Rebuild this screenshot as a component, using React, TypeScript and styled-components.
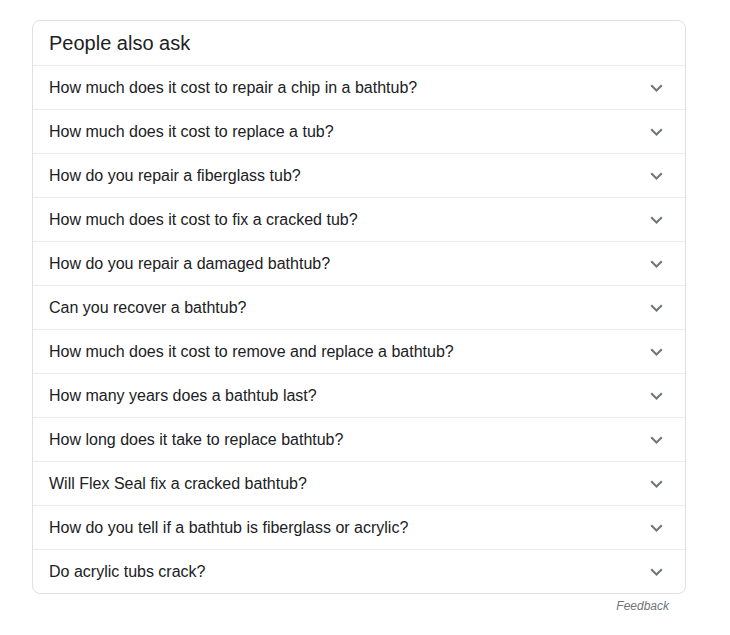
import React from "react";
import styled, { createGlobalStyle } from "styled-components";

const GlobalStyle = createGlobalStyle`
  body {
    margin: 0;
    background: #ffffff;
    font-family: "Liberation Sans", Arial, sans-serif;
  }
`;

const Page = styled.div`
  padding: 20px 0 0 32px;
  width: 654px;
`;

const Card = styled.div`
  border: 1px solid #dfe1e5;
  border-radius: 8px;
  background: #fff;
`;

const Header = styled.div`
  height: 44px;
  display: flex;
  align-items: center;
  padding-left: 16px;
  font-size: 20px;
  color: #202124;
  border-bottom: 1px solid #ebebeb;
`;

const Row = styled.div<{ $last?: boolean }>`
  height: 43px;
  display: flex;
  align-items: center;
  justify-content: space-between;
  padding: 0 22px 0 16px;
  font-size: 16px;
  color: #202124;
  border-bottom: ${(p) => (p.$last ? "none" : "1px solid #ebebeb")};
  cursor: pointer;
`;

const Chevron = styled.svg`
  width: 13px;
  height: 8px;
  flex-shrink: 0;
`;

const Feedback = styled.div`
  text-align: right;
  padding: 5px 17px 0 0;
  font-size: 12px;
  font-style: italic;
  color: #70757a;
`;

const questions = [
  "How much does it cost to repair a chip in a bathtub?",
  "How much does it cost to replace a tub?",
  "How do you repair a fiberglass tub?",
  "How much does it cost to fix a cracked tub?",
  "How do you repair a damaged bathtub?",
  "Can you recover a bathtub?",
  "How much does it cost to remove and replace a bathtub?",
  "How many years does a bathtub last?",
  "How long does it take to replace bathtub?",
  "Will Flex Seal fix a cracked bathtub?",
  "How do you tell if a bathtub is fiberglass or acrylic?",
  "Do acrylic tubs crack?",
];

const App: React.FC = () => {
  return (
    <>
      <GlobalStyle />
      <Page>
        <Card>
          <Header>People also ask</Header>
          {questions.map((q, i) => (
            <Row key={q} $last={i === questions.length - 1}>
              <span>{q}</span>
              <Chevron viewBox="0 0 13 8">
                <path d="M1.2 1.2l5.3 5.3 5.3-5.3" fill="none" stroke="#70757a" strokeWidth="2" />
              </Chevron>
            </Row>
          ))}
        </Card>
        <Feedback>Feedback</Feedback>
      </Page>
    </>
  );
};

export default App;
